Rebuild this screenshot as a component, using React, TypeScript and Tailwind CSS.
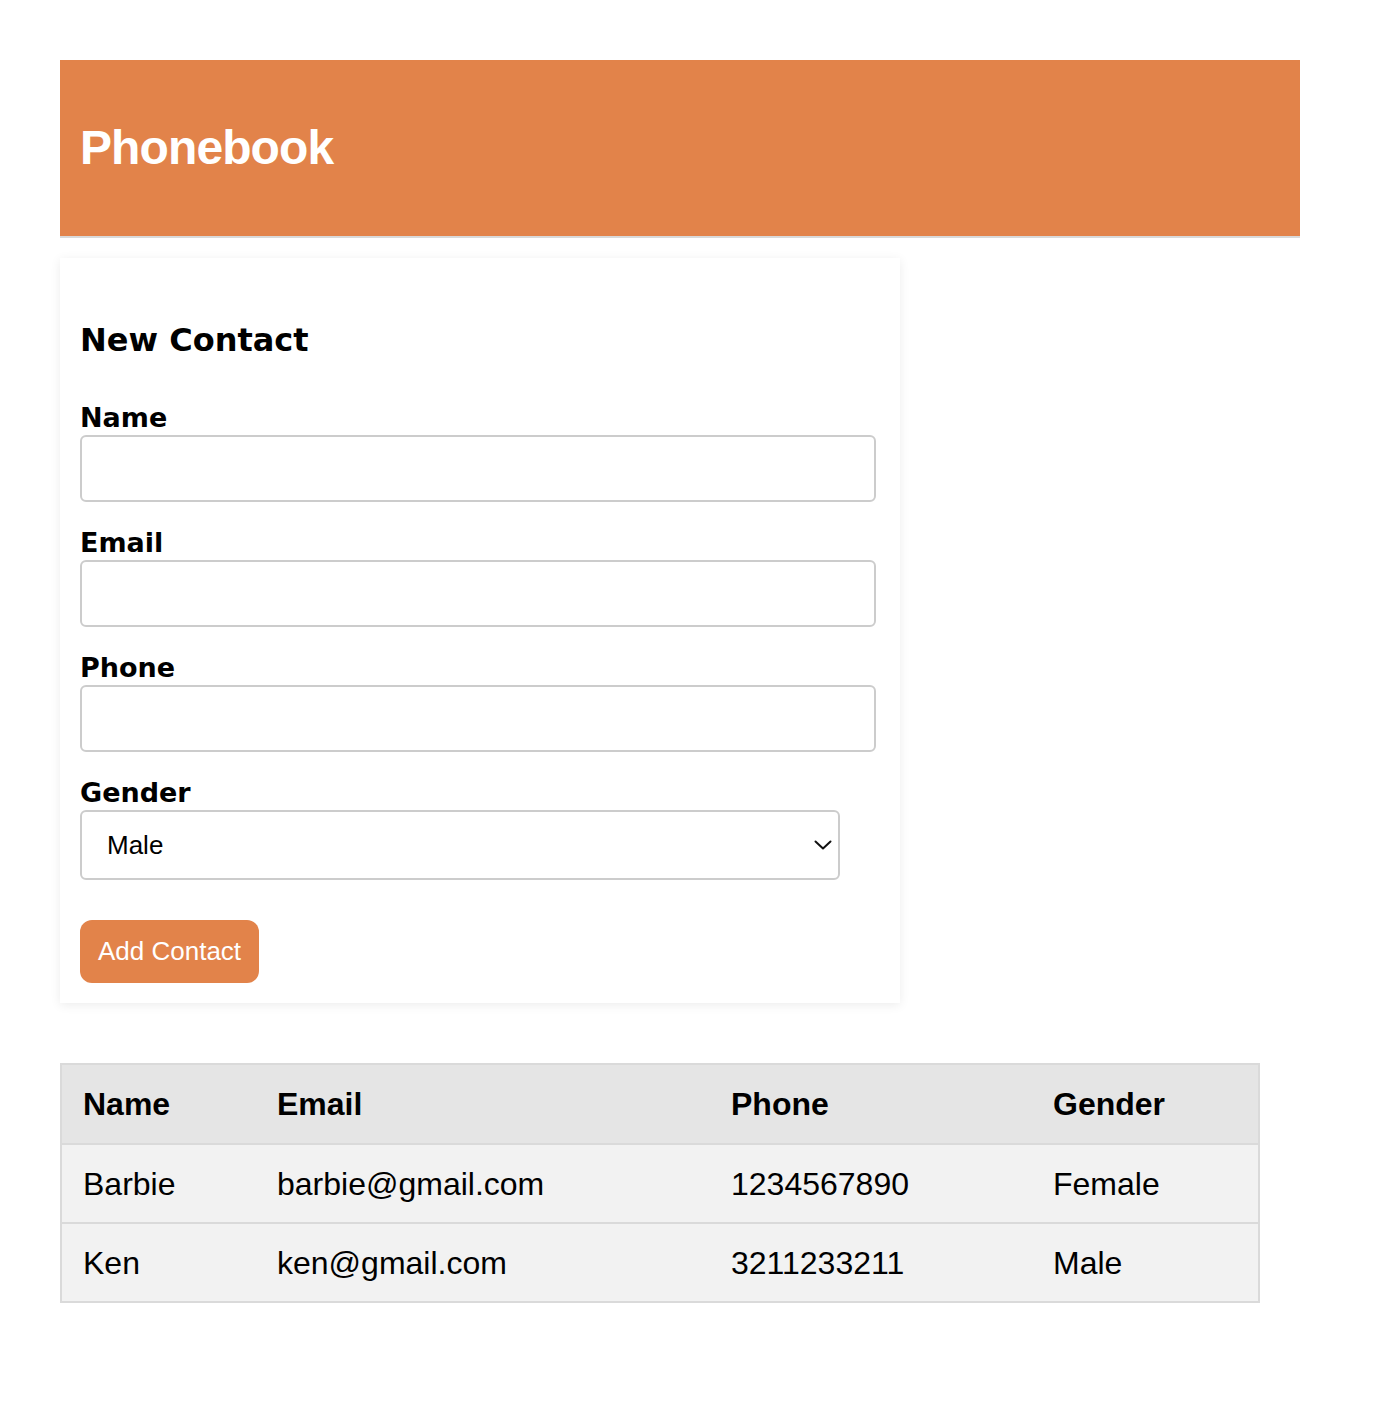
import React, { useState } from 'react'

type Contact = {
  name: string
  email: string
  phone: string
  gender: string
}

const initialContacts: Contact[] = [
  { name: 'Barbie', email: 'barbie@gmail.com', phone: '1234567890', gender: 'Female' },
  { name: 'Ken', email: 'ken@gmail.com', phone: '3211233211', gender: 'Male' },
]

const labelClass = "block text-[27px] leading-[34px] font-bold text-black font-['Verdana','DejaVu_Sans',sans-serif]"

const Field: React.FC<{ label: string; value: string; onChange: (v: string) => void; first?: boolean }> = ({ label, value, onChange, first }) => (
  <div className={first ? '' : 'mt-6'}>
    <label className={labelClass}>{label}</label>
    <input
      value={value}
      onChange={(e) => onChange(e.target.value)}
      className="block w-[796px] h-[67px] rounded-md border-2 border-[#cccccc] bg-white px-4 text-[26px] outline-none font-['Liberation_Sans',sans-serif]"
    />
  </div>
)

const App: React.FC = () => {
  const [contacts, setContacts] = useState<Contact[]>(initialContacts)
  const [name, setName] = useState('')
  const [email, setEmail] = useState('')
  const [phone, setPhone] = useState('')
  const [gender, setGender] = useState('Male')

  const addContact = () => {
    if (!name) return
    setContacts([...contacts, { name, email, phone, gender }])
    setName('')
    setEmail('')
    setPhone('')
  }

  return (
    <div className="min-h-screen bg-white px-[60px] pt-[60px] pb-[110px]">
      {/* Header */}
      <header className="w-[1240px] h-[178px] bg-[#e2834a] border-b-2 border-[#d9d9d9] flex items-center px-5">
        <h1 className="text-[48px] font-bold text-white font-['Liberation_Sans',sans-serif] tracking-[-0.9px] leading-none">Phonebook</h1>
      </header>

      {/* Form card */}
      <div className="mt-5 w-[840px] bg-white shadow-[0_2px_10px_rgba(0,0,0,0.08)] px-5 pt-5 pb-5">
        <h2 className="mt-[42px] mb-[41px] text-[32px] leading-[40px] font-bold text-black font-['Verdana','DejaVu_Sans',sans-serif]">New Contact</h2>
        <Field label="Name" value={name} onChange={setName} first />
        <Field label="Email" value={email} onChange={setEmail} />
        <Field label="Phone" value={phone} onChange={setPhone} />
        <div className="mt-6">
          <label className={labelClass}>Gender</label>
          <div className="relative w-[760px]">
            <select
              value={gender}
              onChange={(e) => setGender(e.target.value)}
              className="block w-[760px] h-[70px] appearance-none rounded-md border-2 border-[#cccccc] bg-white pl-[25px] text-[26px] text-black outline-none font-['Liberation_Sans',sans-serif]"
            >
              <option>Male</option>
              <option>Female</option>
            </select>
            <svg className="pointer-events-none absolute right-[8px] top-[30px]" width="18" height="10" viewBox="0 0 18 10" fill="none">
              <path d="M1.5 1.5 L9 8.5 L16.5 1.5" stroke="#111" strokeWidth="2" strokeLinecap="round" strokeLinejoin="round" />
            </svg>
          </div>
        </div>
        <button
          onClick={addContact}
          className="mt-10 h-[63px] rounded-xl bg-[#e2834a] px-[18px] text-[26px] text-white font-['Liberation_Sans',sans-serif]"
        >
          Add Contact
        </button>
      </div>

      {/* Contacts table */}
      <table className="mt-[60px] w-[1200px] border-collapse border-2 border-[#dadada] font-['Liberation_Sans',sans-serif] text-[32px] text-black">
        <thead>
          <tr className="bg-[#e5e5e5] border-b-2 border-[#dadada]">
            <th className="w-[195px] h-[80px] pl-[21px] text-left font-bold">Name</th>
            <th className="w-[454px] h-[80px] pl-[21px] text-left font-bold">Email</th>
            <th className="w-[322px] h-[80px] pl-[21px] text-left font-bold">Phone</th>
            <th className="h-[80px] pl-[21px] text-left font-bold">Gender</th>
          </tr>
        </thead>
        <tbody>
          {contacts.map((c, i) => (
            <tr key={i} className="bg-[#f2f2f2] border-b-2 border-[#dadada]">
              <td className="h-[79px] pl-[21px]">{c.name}</td>
              <td className="h-[79px] pl-[21px]">{c.email}</td>
              <td className="h-[79px] pl-[21px]">{c.phone}</td>
              <td className="h-[79px] pl-[21px]">{c.gender}</td>
            </tr>
          ))}
        </tbody>
      </table>
    </div>
  )
}

export default App
